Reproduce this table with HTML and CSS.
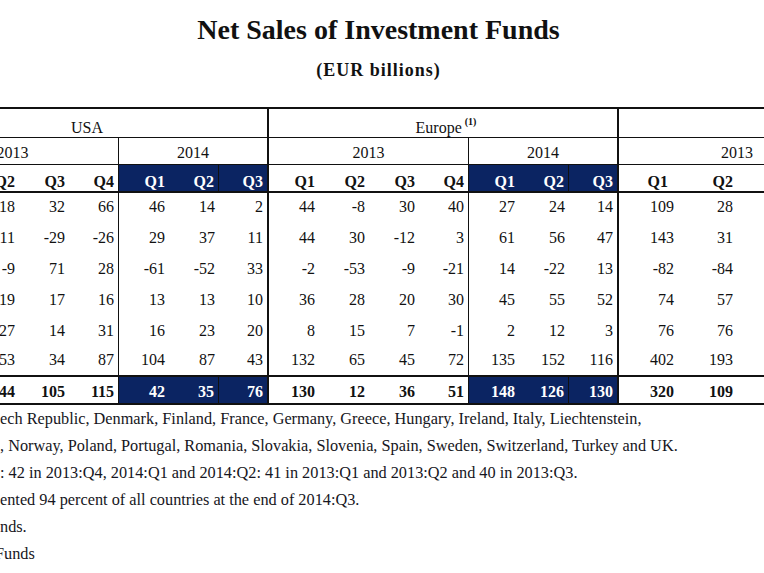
FILE: index.html
```html
<!DOCTYPE html>
<html lang="en">
<head>
<meta charset="utf-8">
<title>Net Sales of Investment Funds</title>
<link rel="stylesheet" href="styles.css">
</head>
<body>
<header class="head">
  <h1 class="title">Net Sales of Investment Funds</h1>
  <p class="subtitle">(EUR billions)</p>
</header>

<div class="sheet">
  <div class="table">
    <div class="row region">
      <span class="span7 br2">USA</span>
      <span class="span7 br2"><span class="lbl">Europe<sup class="fn">(1)</sup></span></span>
      <span class="span3"></span>
    </div>
    <div class="row year">
      <span class="span4 br1">2013</span>
      <span class="span3 br2">2014</span>
      <span class="span4 br1">2013</span>
      <span class="span3 br2">2014</span>
      <span class="span3">2013</span>
    </div>
    <div class="row cells quarters navy">
      <span></span><span>Q2</span><span>Q3</span><span>Q4</span>
      <span>Q1</span><span>Q2</span><span>Q3</span>
      <span>Q1</span><span>Q2</span><span>Q3</span><span>Q4</span>
      <span>Q1</span><span>Q2</span><span>Q3</span>
      <span>Q1</span><span>Q2</span><span></span>
    </div>
    <div class="row cells data h30">
      <span></span><span>18</span><span>32</span><span>66</span>
      <span>46</span><span>14</span><span>2</span>
      <span>44</span><span>-8</span><span>30</span><span>40</span>
      <span>27</span><span>24</span><span>14</span>
      <span>109</span><span>28</span><span></span>
    </div>
    <div class="row cells data h31">
      <span></span><span>-11</span><span>-29</span><span>-26</span>
      <span>29</span><span>37</span><span>11</span>
      <span>44</span><span>30</span><span>-12</span><span>3</span>
      <span>61</span><span>56</span><span>47</span>
      <span>143</span><span>31</span><span></span>
    </div>
    <div class="row cells data h31">
      <span></span><span>-9</span><span>71</span><span>28</span>
      <span>-61</span><span>-52</span><span>33</span>
      <span>-2</span><span>-53</span><span>-9</span><span>-21</span>
      <span>14</span><span>-22</span><span>13</span>
      <span>-82</span><span>-84</span><span></span>
    </div>
    <div class="row cells data h31">
      <span></span><span>19</span><span>17</span><span>16</span>
      <span>13</span><span>13</span><span>10</span>
      <span>36</span><span>28</span><span>20</span><span>30</span>
      <span>45</span><span>55</span><span>52</span>
      <span>74</span><span>57</span><span></span>
    </div>
    <div class="row cells data h31">
      <span></span><span>27</span><span>14</span><span>31</span>
      <span>16</span><span>23</span><span>20</span>
      <span>8</span><span>15</span><span>7</span><span>-1</span>
      <span>2</span><span>12</span><span>3</span>
      <span>76</span><span>76</span><span></span>
    </div>
    <div class="row cells data h30 last">
      <span></span><span>53</span><span>34</span><span>87</span>
      <span>104</span><span>87</span><span>43</span>
      <span>132</span><span>65</span><span>45</span><span>72</span>
      <span>135</span><span>152</span><span>116</span>
      <span>402</span><span>193</span><span></span>
    </div>
    <div class="row cells total navy">
      <span></span><span>44</span><span>105</span><span>115</span>
      <span>42</span><span>35</span><span>76</span>
      <span>130</span><span>12</span><span>36</span><span>51</span>
      <span>148</span><span>126</span><span>130</span>
      <span>320</span><span>109</span><span></span>
    </div>
  </div>
</div>

<div class="notes">
  <p>ech Republic, Denmark, Finland, France, Germany, Greece, Hungary, Ireland, Italy, Liechtenstein,</p>
  <p>, Norway, Poland, Portugal, Romania, Slovakia, Slovenia, Spain, Sweden, Switzerland, Turkey and UK.</p>
  <p>: 42 in 2013:Q4, 2014:Q1 and 2014:Q2: 41 in 2013:Q1 and 2013:Q2 and 40 in 2013:Q3.</p>
  <p>ented 94 percent of all countries at the end of 2014:Q3.</p>
  <p>nds.</p>
  <p class="cut">Funds</p>
</div>
</body>
</html>
```

FILE: styles.css
```css
* { box-sizing: border-box; }

html, body {
  margin: 0;
  padding: 0;
  background: #ffffff;
}

body {
  width: 764px;
  overflow: hidden;
  font-family: "Liberation Serif", "Times New Roman", serif;
  color: #111111;
}

.head {
  padding-top: 16px;
  padding-right: 7px;
  text-align: center;
}

.title {
  margin: 0;
  font-size: 28px;
  line-height: 28px;
  font-weight: bold;
}

.subtitle {
  margin: 17px 0 0;
  font-size: 18px;
  line-height: 18px;
  font-weight: bold;
  letter-spacing: 1px;
}

.sheet {
  margin-top: 28px;
  width: 764px;
  overflow: hidden;
}

.table {
  --cols: 62px repeat(13, 50px) 59px 59px 118px;
  width: 948px;
  margin-left: -93px;
  border-top: 2px solid #111;
  font-size: 16px;
  line-height: 16px;
}

.row {
  display: grid;
  grid-template-columns: var(--cols);
  border-bottom: 1px solid #111;
}

.row > span {
  display: flex;
  align-items: center;
  justify-content: flex-end;
  padding-right: 4px;
  white-space: nowrap;
}

.span7 { grid-column: span 7; }
.span4 { grid-column: span 4; }
.span3 { grid-column: span 3; }

.br1 { border-right: 1px solid #111; }
.br2 { border-right: 2px solid #111; }

.region { height: 29px; }
.region > span {
  justify-content: center;
  align-items: flex-end;
  padding: 0 0 1px;
}

.lbl {
  display: block;
  padding-left: 6px;
}

.fn {
  font-size: 10px;
  line-height: 10px;
  font-weight: bold;
  vertical-align: 8px;
  margin-left: 3px;
}

.year { height: 27px; }
.year > span {
  justify-content: center;
  align-items: flex-end;
  padding: 0 0 3px;
}

.quarters {
  height: 28px;
  border-bottom-width: 2px;
  font-weight: bold;
}
.quarters > span {
  align-items: flex-end;
  padding-bottom: 1px;
}
.quarters > span:nth-child(15) { padding-right: 10px; }

.cells > span:nth-child(4),
.cells > span:nth-child(11) {
  border-right: 1px solid #111;
}
.cells > span:nth-child(7),
.cells > span:nth-child(14) {
  border-right: 2px solid #111;
}

.navy > span:nth-child(5),
.navy > span:nth-child(6),
.navy > span:nth-child(7),
.navy > span:nth-child(12),
.navy > span:nth-child(13),
.navy > span:nth-child(14) {
  background: #0b2462;
  color: #ffffff;
}
.navy > span:nth-child(6),
.navy > span:nth-child(13) {
  border-right: 1px solid #111;
}

.data { border-bottom: 0; }
.data > span { padding-bottom: 2px; }
.h30 { height: 30px; }
.h31 { height: 31px; }
.data.last {
  border-bottom: 2px solid #111;
  height: 30px;
}

.total {
  height: 28px;
  border-bottom-width: 2px;
  font-weight: bold;
}
.total > span { padding-top: 3px; }

.notes {
  font-size: 16.3px;
  line-height: 27px;
  color: #161622;
  white-space: nowrap;
}

.notes p { margin: 0; }

.notes .cut { text-indent: -5px; }
```
